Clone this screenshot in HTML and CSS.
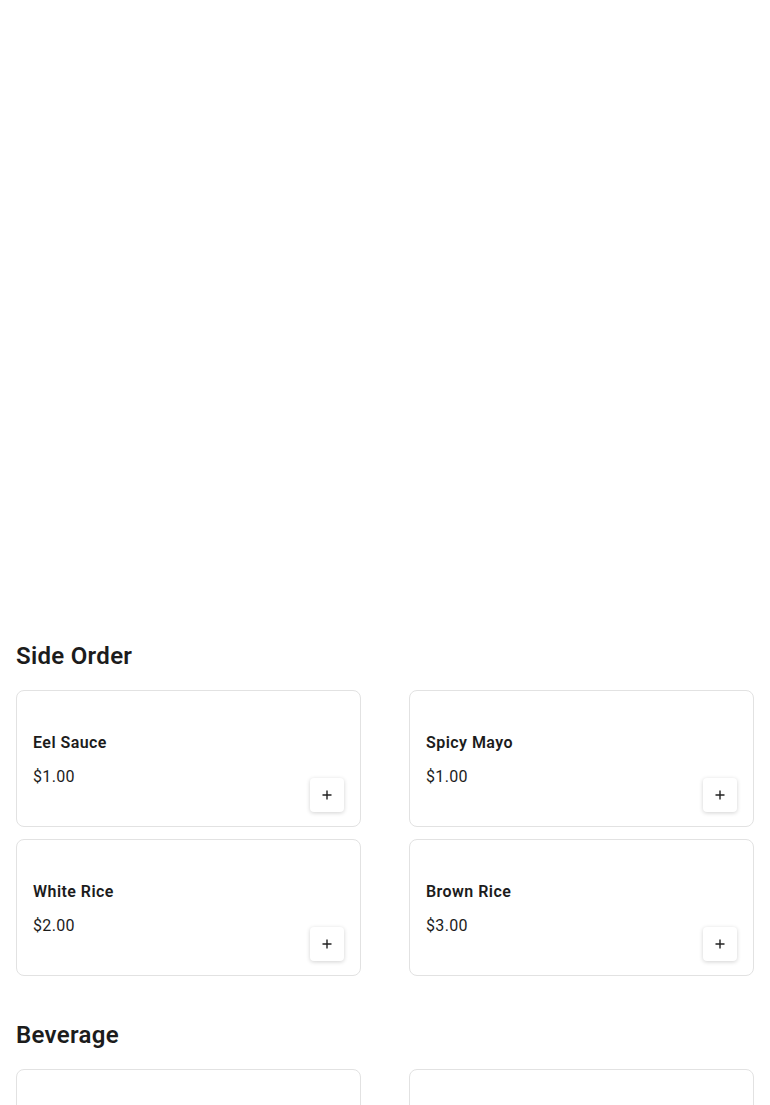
FILE: index.html
```html
<!DOCTYPE html>
<html>
<head>
<meta charset="utf-8">
<link rel="stylesheet" href="styles.css">
</head>
<body>
<div class="hero"></div>
<section class="section">
  <h2 class="section-title">Side Order</h2>
  <div class="grid">
    <div class="card">
      <div class="card-title">Eel Sauce</div>
      <div class="card-row"><span class="price">$1.00</span><button class="add" aria-label="Add"><svg width="12" height="12" viewBox="0 0 12 12"><path d="M6 1.5v9M1.5 6h9" stroke="#222" stroke-width="1.4" fill="none"/></svg></button></div>
    </div>
    <div class="card">
      <div class="card-title">Spicy Mayo</div>
      <div class="card-row"><span class="price">$1.00</span><button class="add" aria-label="Add"><svg width="12" height="12" viewBox="0 0 12 12"><path d="M6 1.5v9M1.5 6h9" stroke="#222" stroke-width="1.4" fill="none"/></svg></button></div>
    </div>
    <div class="card">
      <div class="card-title">White Rice</div>
      <div class="card-row"><span class="price">$2.00</span><button class="add" aria-label="Add"><svg width="12" height="12" viewBox="0 0 12 12"><path d="M6 1.5v9M1.5 6h9" stroke="#222" stroke-width="1.4" fill="none"/></svg></button></div>
    </div>
    <div class="card">
      <div class="card-title">Brown Rice</div>
      <div class="card-row"><span class="price">$3.00</span><button class="add" aria-label="Add"><svg width="12" height="12" viewBox="0 0 12 12"><path d="M6 1.5v9M1.5 6h9" stroke="#222" stroke-width="1.4" fill="none"/></svg></button></div>
    </div>
  </div>
</section>
<section class="section">
  <h2 class="section-title">Beverage</h2>
  <div class="grid">
    <div class="card"><div class="card-title">&nbsp;</div><div class="card-row"><span class="price">&nbsp;</span></div></div>
    <div class="card"><div class="card-title">&nbsp;</div><div class="card-row"><span class="price">&nbsp;</span></div></div>
  </div>
</section>
</body>
</html>
```
FILE: styles.css
```css
* { box-sizing: border-box; }
body {
  margin: 0;
  background: #fff;
  font-family: Roboto, "Liberation Sans", sans-serif;
  color: #1c1c1c;
}
.hero { height: 640px; }
.section { padding: 0 16px; margin-bottom: 43px; }
.section-title {
  margin: 0 0 18px;
  font-size: 24px;
  line-height: 32px;
  font-weight: 600;
  letter-spacing: 0.3px;
  color: #1c1c1c;
}
.grid {
  display: grid;
  grid-template-columns: 1fr 1fr;
  column-gap: 48px;
  row-gap: 12px;
}
.card {
  border: 1px solid #e2e2e2;
  border-radius: 8px;
  padding: 40px 16px 14px;
  height: 137px;
}
.card-title {
  font-size: 16px;
  line-height: 24px;
  font-weight: 600;
  letter-spacing: 0.45px;
  margin-bottom: 10px;
}
.card-row {
  display: flex;
  justify-content: space-between;
  align-items: flex-start;
}
.price {
  font-size: 16px;
  line-height: 24px;
  letter-spacing: 0.35px;
}
.add {
  margin-top: 13px;
  width: 34px;
  height: 34px;
  border: none;
  border-radius: 4px;
  background: #fff;
  box-shadow: 0 1px 4px rgba(0,0,0,0.18);
  display: flex;
  align-items: center;
  justify-content: center;
  padding: 0;
}
```
